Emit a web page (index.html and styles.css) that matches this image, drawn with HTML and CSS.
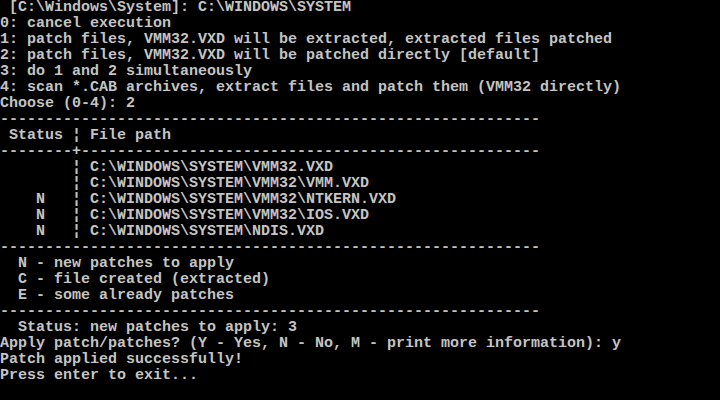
FILE: index.html
```html
<!DOCTYPE html>
<html>
<head>
<meta charset="utf-8">
<link rel="stylesheet" href="styles.css">
</head>
<body>
<div class="screen">
<div class="line"> [C:\Windows\System]: C:\WINDOWS\SYSTEM</div>
<div class="line">0: cancel execution</div>
<div class="line">1: patch files, VMM32.VXD will be extracted, extracted files patched</div>
<div class="line">2: patch files, VMM32.VXD will be patched directly [default]</div>
<div class="line">3: do 1 and 2 simultaneously</div>
<div class="line">4: scan *.CAB archives, extract files and patch them (VMM32 directly)</div>
<div class="line">Choose (0-4): 2</div>
<div class="line">------------------------------------------------------------</div>
<div class="line"> Status ¦ File path</div>
<div class="line">--------+---------------------------------------------------</div>
<div class="line">        ¦ C:\WINDOWS\SYSTEM\VMM32.VXD</div>
<div class="line">        ¦ C:\WINDOWS\SYSTEM\VMM32\VMM.VXD</div>
<div class="line">    N   ¦ C:\WINDOWS\SYSTEM\VMM32\NTKERN.VXD</div>
<div class="line">    N   ¦ C:\WINDOWS\SYSTEM\VMM32\IOS.VXD</div>
<div class="line">    N   ¦ C:\WINDOWS\SYSTEM\NDIS.VXD</div>
<div class="line">------------------------------------------------------------</div>
<div class="line">  N - new patches to apply</div>
<div class="line">  C - file created (extracted)</div>
<div class="line">  E - some already patches</div>
<div class="line">------------------------------------------------------------</div>
<div class="line">  Status: new patches to apply: 3</div>
<div class="line">Apply patch/patches? (Y - Yes, N - No, M - print more information): y</div>
<div class="line">Patch applied successfully!</div>
<div class="line">Press enter to exit...</div>
</div>
</body>
</html>
```
FILE: styles.css
```css
html, body {
  margin: 0;
  padding: 0;
  background: #000;
}
.screen {
  width: 720px;
  height: 400px;
  overflow: hidden;
  background: #000;
  color: #c4c4c4;
  font-family: "Liberation Mono", "DejaVu Sans Mono", monospace;
  font-size: 15px;
  font-weight: bold;
  line-height: 16px;
}
.line {
  white-space: pre;
  height: 16px;
}
```
